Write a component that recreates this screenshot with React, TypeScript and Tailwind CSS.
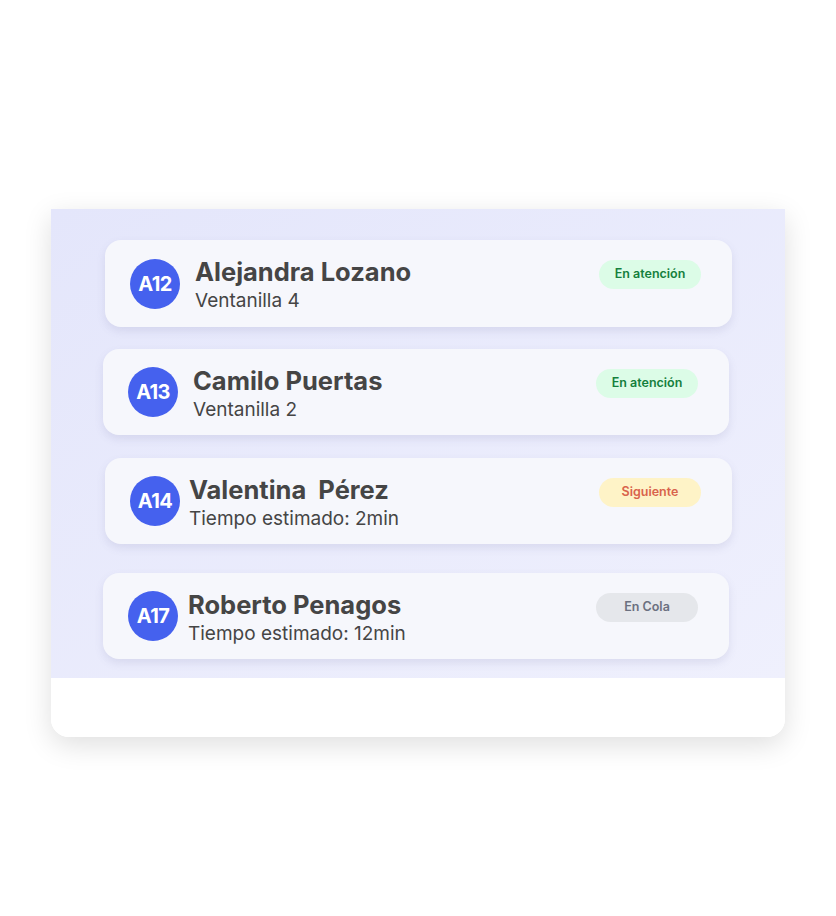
import React from "react";

type Item = {
  code: string;
  name: string;
  sub: string;
  badge: string;
  badgeCls: string;
  cardCls: string;
  gapCls: string;
};

const items: Item[] = [
  {
    code: "A12",
    name: "Alejandra Lozano",
    sub: "Ventanilla 4",
    badge: "En atención",
    badgeCls: "bg-[#dcfce7] text-[#15803d]",
    cardCls: "ml-[54px] w-[627px] h-[87px]",
    gapCls: "gap-[15px]",
  },
  {
    code: "A13",
    name: "Camilo Puertas",
    sub: "Ventanilla 2",
    badge: "En atención",
    badgeCls: "bg-[#dcfce7] text-[#15803d]",
    cardCls: "ml-[52px] w-[626px] h-[86px] mt-[22px]",
    gapCls: "gap-[15px]",
  },
  {
    code: "A14",
    name: "Valentina  Pérez",
    sub: "Tiempo estimado: 2min",
    badge: "Siguiente",
    badgeCls: "bg-[#fef3c7] text-[#d9634c]",
    cardCls: "ml-[54px] w-[627px] h-[86px] mt-[23px]",
    gapCls: "gap-[9px]",
  },
  {
    code: "A17",
    name: "Roberto Penagos",
    sub: "Tiempo estimado: 12min",
    badge: "En Cola",
    badgeCls: "bg-[#e5e7eb] text-[#6b7080]",
    cardCls: "ml-[52px] w-[626px] h-[86px] mt-[29px]",
    gapCls: "gap-[10px]",
  },
];

export default function App() {
  return (
    <div
      className="w-[836px] h-[916px] bg-white pt-[209px] pl-[51px]"
      style={{ fontFamily: "Inter, 'Noto Sans', sans-serif" }}
    >
      <div className="w-[734px] h-[528px] bg-white rounded-b-[18px] shadow-[0_8px_28px_rgba(0,0,0,0.13)] overflow-hidden flex flex-col">
        <div className="h-[469px] bg-gradient-to-br from-[#e4e6fb] to-[#eff0fd] pt-[31px]">
          {items.map((it) => (
            <div
              key={it.code}
              className={`${it.cardCls} bg-[#f6f7fc] rounded-[16px] shadow-[0_4px_8px_rgba(90,90,150,0.13)] flex items-start justify-between pl-[25px] pr-[31px]`}
            >
              <div className={`flex items-center ${it.gapCls} h-full`}>
                <div className="w-[50px] h-[50px] rounded-full bg-[#4561ee] flex items-center justify-center text-white font-bold text-[20px] tracking-[-0.6px]">
                  {it.code}
                </div>
                <div className="flex flex-col mt-[5px]">
                  <div className="text-[25.5px] leading-[30px] font-bold text-[#454545] whitespace-pre">
                    {it.name}
                  </div>
                  <div className="text-[19px] leading-[28px] text-[#454545]">
                    {it.sub}
                  </div>
                </div>
              </div>
              <div
                className={`mt-[20px] w-[102px] h-[29px] rounded-full flex items-center justify-center text-[12.5px] font-semibold ${it.badgeCls}`}
              >
                {it.badge}
              </div>
            </div>
          ))}
        </div>
        <div className="flex-1 bg-white" />
      </div>
    </div>
  );
}
